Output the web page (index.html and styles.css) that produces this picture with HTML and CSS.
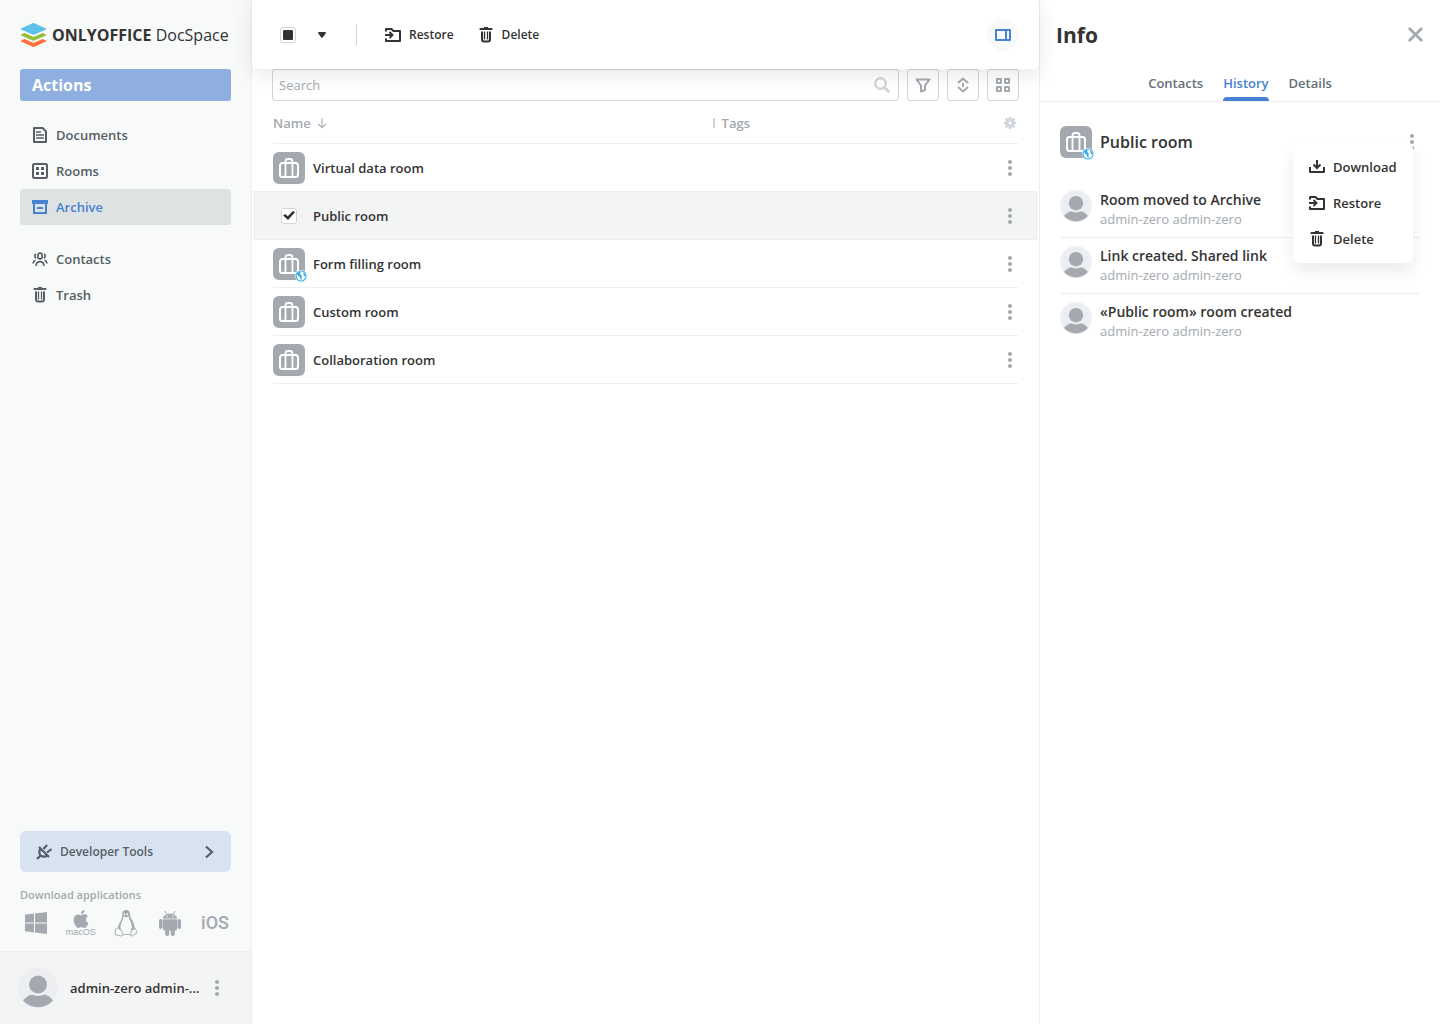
FILE: index.html
```html
<!DOCTYPE html>
<html lang="en">
<head>
<meta charset="utf-8">
<meta name="viewport" content="width=device-width, initial-scale=1">
<title>Archive - DocSpace</title>
<link rel="stylesheet" href="styles.css">
</head>
<body>
<svg class="sprite" aria-hidden="true">
  <symbol id="i-document" viewBox="0 0 16 16"><path d="M2 1h8.500L14 4.500V15H2z" fill="none" stroke="currentColor" stroke-width="2" stroke-linejoin="round"/><path d="M4 5h5M4 8h8M4 11h8" stroke="currentColor" stroke-width="1.600"/></symbol>
  <symbol id="i-rooms" viewBox="0 0 16 16"><rect x="1" y="1" width="14" height="14" rx="1.500" fill="none" stroke="currentColor" stroke-width="2"/><path d="M4 4h3v3H4zM9 4h3v3H9zM4 9h3v3H4zM9 9h3v3H9z" fill="currentColor"/></symbol>
  <symbol id="i-archive" viewBox="0 0 16 16"><path fill="currentColor" fill-rule="evenodd" d="M0 1h16v4h-1v10H1V5H0zM2 3v0h12V3zM3 5v8h10V5zM5 8h6v2H5z"/></symbol>
  <symbol id="i-people" viewBox="0 0 16 16"><g fill="none" stroke="currentColor" stroke-width="1.700"><rect x="5.900" y="2.200" width="4.200" height="5.600" rx="2.100"/><path d="M3.800 3C2.500 4 2.700 6 4 7.300M12.200 3C13.500 4 13.300 6 12 7.300M4.200 14.800c-.5-5.500 8.100-5.500 7.600 0M1 12.500c.2-1.800 1-2.800 2.500-3.300M15 12.500c-.2-1.800-1-2.800-2.500-3.300"/></g></symbol>
  <symbol id="i-trash" viewBox="0 0 16 16"><path fill="currentColor" d="M6 0h4v1h3.500q1 0 1 1v1h-13V2q0-1 1-1H6z"/><path d="M4 4.500V12.500q0 2 2 2h4q2 0 2-2V4.500" fill="none" stroke="currentColor" stroke-width="2"/><path d="M6.500 4.500v8M9.500 4.500v8" stroke="currentColor" stroke-width="1.300"/></symbol>
  <symbol id="i-restore" viewBox="0 0 16 16"><path d="M1 4.500V2h5.500l2 2H15v10H1v-2.500" fill="none" stroke="currentColor" stroke-width="2" stroke-linejoin="round"/><path d="M0 8h7M4.500 5 7.500 8l-3 3" fill="none" stroke="currentColor" stroke-width="1.900"/></symbol>
  <symbol id="i-download" viewBox="0 0 16 16"><path d="M1 8v5h14V8" fill="none" stroke="currentColor" stroke-width="2" stroke-linejoin="round"/><path d="M8 1v8M4.500 5.500 8 9 11.500 5.500" fill="none" stroke="currentColor" stroke-width="2"/></symbol>
  <symbol id="i-dots" viewBox="0 0 16 16"><g fill="currentColor"><circle cx="8" cy="2" r="2"/><circle cx="8" cy="8" r="2"/><circle cx="8" cy="14" r="2"/></g></symbol>
  <symbol id="i-plug" viewBox="0 0 16 16"><g fill="none" stroke="currentColor" stroke-width="2.200"><path d="M3 3 13 13M4.500 4.500C2.500 8 3 9.500 4.500 11.500 6.500 13 8.500 13.500 11.500 11.500M4.500 11.500 1 15M7.500 5 11 1M11 8.500 15.500 5"/></g></symbol>
  <symbol id="i-chevron" viewBox="0 0 16 16"><path d="M5 2.500 11 8l-6 5.500" fill="none" stroke="currentColor" stroke-width="2.200"/></symbol>
  <symbol id="i-windows" viewBox="0 0 24 24"><path fill="currentColor" d="M1 3.800l9-1.200V11.500H1zM11 2.500 23 1v10.500H11zM1 12.500h9v8.900L1 20.200zM11 12.500h12V23l-12-1.500z"/></symbol>
  <symbol id="i-apple" viewBox="0 0 24 24"><path fill="currentColor" d="M12.152 6.896c-.948 0-2.415-1.078-3.960-1.040-2.040.027-3.910 1.183-4.961 3.014-2.117 3.675-.546 9.103 1.519 12.090 1.013 1.454 2.208 3.090 3.792 3.039 1.520-.065 2.090-.987 3.935-.987 1.831 0 2.350.987 3.960.948 1.637-.026 2.676-1.480 3.676-2.948 1.156-1.688 1.636-3.325 1.662-3.415-.039-.013-3.182-1.221-3.220-4.857-.026-3.040 2.480-4.494 2.597-4.559-1.429-2.090-3.623-2.324-4.390-2.376-2-.156-3.675 1.090-4.610 1.090zM15.530 3.830c.843-1.012 1.400-2.427 1.245-3.830-1.207.052-2.662.805-3.532 1.818-.780.896-1.454 2.338-1.273 3.714 1.338.104 2.715-.688 3.559-1.701"/></symbol>
  <symbol id="i-linux" viewBox="0 0 24 28"><path fill="currentColor" fill-rule="evenodd" d="M12 1C8.800 1 8 3.500 8.200 6.500c.1 3-1.200 4.500-2.400 7C4.800 15.500 4.200 17 4 19l2.500 3c-.5-5 .5-8 2.500-12l.5-3 2.500 1.500L14.500 7l.8 3c2.500 4.500 3.200 8.500 2.200 12l3-2c.5-3-1-6.500-2.500-9-1.800-2.500-1.700-3.500-1.900-6C15.900 2.800 15 1 12 1zm-1.500 3.200a1 1 0 1 1 0 2 1 1 0 0 1 0-2zm2.900 0a1 1 0 1 1 0 2 1 1 0 0 1 0-2z"/><path d="M4.500 18.500 1.500 20 1 25.500l5.500 1.500 3-1-3-6zM18 19l-1.500 7.500 2 .5 4.500-3.500-2-4.500zM9.500 25.500h6.500" fill="none" stroke="currentColor" stroke-width=".9"/></symbol>
  <symbol id="i-android" viewBox="0 0 24 28"><g fill="currentColor"><path d="M5 9.500C5 3 19 3 19 9.500z"/><path d="M5 10.300h14V20q0 1.500-1.500 1.500h-11Q5 21.500 5 20z"/><rect x="1" y="10" width="3.600" height="10" rx="1.700"/><rect x="19.400" y="10" width="3.600" height="10" rx="1.700"/><rect x="7.200" y="18" width="4" height="9" rx="1.900"/><rect x="12.800" y="18" width="4" height="9" rx="1.900"/></g><path d="M7 2l2 3.500M17 2l-2 3.500" stroke="currentColor"/><g fill="#f8f9f9"><circle cx="9" cy="7.300" r=".8"/><circle cx="15" cy="7.300" r=".8"/></g></symbol>
  <symbol id="i-avatar" viewBox="0 0 40 40"><circle cx="20" cy="20" r="20" fill="#eceef1"/><circle cx="20" cy="16.500" r="9" fill="#a3a9ae"/><path d="M5 32.500C9 28 13 26 15 27q5 2.200 10 0c3-1 7 1.500 10 5.500a20 20 0 0 1-30 0z" fill="#a3a9ae"/></symbol>
  <symbol id="i-case" viewBox="0 0 32 32"><g fill="none" stroke="#fff"><rect x="7" y="11" width="18" height="14" rx="2.500" stroke-width="2"/><path d="M12.500 25V9.500q0-2.500 2.500-2.500h2q2.500 0 2.500 2.500V25" stroke-width="1.800"/></g></symbol>
  <symbol id="i-globe" viewBox="0 0 12 12"><circle cx="6" cy="6" r="6" fill="#fff"/><circle cx="6" cy="6" r="5" fill="#fff" stroke="#35abe3" stroke-width="1.100"/><path fill="#35abe3" d="M2 3.500 4 2l2 .3L5 4l1.800 1.500L6.500 7.500l.3 2.500-1.300-.5L4.800 7 2.500 5zM8 2l2 2.500.3 2L8.800 6z"/></symbol>
  <symbol id="i-search" viewBox="0 0 16 16"><g fill="none" stroke="currentColor"><circle cx="6.500" cy="6.500" r="5.200" stroke-width="2.400"/><path d="m10.500 10.500 4 4" stroke-width="2.800" stroke-linecap="round"/></g></symbol>
  <symbol id="i-filter" viewBox="0 0 16 16"><path d="M1.500 2.500h13L10 8.500v4.500L6 14.500v-6z" fill="none" stroke="currentColor" stroke-width="2" stroke-linejoin="round"/></symbol>
  <symbol id="i-sort" viewBox="0 0 16 16"><path d="M3 6l5-4.500L13 6M3 10l5 4.500L13 10M8 6v4" fill="none" stroke="currentColor" stroke-width="2"/></symbol>
  <symbol id="i-tiles" viewBox="0 0 16 16"><path d="M2 2h4v4H2zM10 2h4v4h-4zM2 10h4v4H2zM10 10h4v4h-4z" fill="none" stroke="currentColor" stroke-width="2" stroke-linejoin="round"/></symbol>
  <symbol id="i-panel" viewBox="0 0 16 16"><path d="M1 3h14v10H1zM11 3v10" fill="none" stroke="currentColor" stroke-width="2" stroke-linejoin="round"/></symbol>
  <symbol id="i-gear" viewBox="0 0 12 12"><circle cx="6" cy="6" r="3" fill="none" stroke="currentColor" stroke-width="3.200"/><path d="M6 0v2M6 10v2M0 6h2M10 6h2M1.500 1.500l1.700 1.700M8.800 8.800l1.700 1.700M1.500 10.500l1.700-1.700M8.800 3.200l1.700-1.700" stroke="currentColor" stroke-width="2.400"/></symbol>
  <symbol id="i-arrow" viewBox="0 0 12 12"><path d="M6 1.500v9M2 6.800l4 3.700 4-3.700" fill="none" stroke="currentColor" stroke-width="1.100"/></symbol>
  <symbol id="i-caret" viewBox="0 0 8 8"><path d="M.5 1h7q.8.800 0 1.800L4.700 6.500q-.7.700-1.400 0L.5 2.800Q-.3 1.800.5 1z" fill="currentColor"/></symbol>
  <symbol id="i-close" viewBox="0 0 16 16"><path d="M2.500 2.500l11 11M13.500 2.500l-11 11" stroke="currentColor" stroke-width="2.600" stroke-linecap="round"/></symbol>
  <symbol id="i-logo" viewBox="0 0 26 24"><path fill="#ff6f3d" d="M12 23.700.6 18.500q-1-.5 0-1L4 16l8 3.500q1 .4 2 0L22 16l3.400 1.500q1 .5 0 1L14 23.700q-1 .4-2 0z"/><path fill="#95c038" d="M12 17.500.6 12.500q-1-.5 0-1L4 10l8 3.500q1 .4 2 0L22 10l3.400 1.500q1 .5 0 1L14 17.500q-1 .4-2 0z"/><path fill="#5dc0e8" d="M12 11.500.6 6.500q-1-.5 0-1L12 .3q1-.4 2 0l11.400 5.200q1 .5 0 1L14 11.500q-1 .4-2 0z"/></symbol>
</svg>

<div class="app">
  <aside class="sidebar">
    <a class="logo" href="#"><svg class="logo-mark"><use href="#i-logo"/></svg><span class="logo-text"><b>ONLYOFFICE</b> DocSpace</span></a>
    <button class="actions" type="button">Actions</button>
    <nav class="nav">
      <a href="#"><svg class="icon"><use href="#i-document"/></svg>Documents</a>
      <a href="#"><svg class="icon"><use href="#i-rooms"/></svg>Rooms</a>
      <a href="#" class="active" aria-current="page"><svg class="icon"><use href="#i-archive"/></svg>Archive</a>
      <a href="#" class="nav-split"><svg class="icon"><use href="#i-people"/></svg>Contacts</a>
      <a href="#"><svg class="icon"><use href="#i-trash"/></svg>Trash</a>
    </nav>
    <div class="sidebar-bottom">
      <a class="dev-tools" href="#"><svg class="icon"><use href="#i-plug"/></svg><span>Developer Tools</span><svg class="icon"><use href="#i-chevron"/></svg></a>
      <p class="apps-title">Download applications</p>
      <div class="apps">
        <a href="#" aria-label="Windows"><svg class="app-win"><use href="#i-windows"/></svg></a>
        <a href="#"><svg class="app-apple"><use href="#i-apple"/></svg><span class="macos">macOS</span></a>
        <a href="#" aria-label="Linux"><svg class="app-tall"><use href="#i-linux"/></svg></a>
        <a href="#" aria-label="Android"><svg class="app-tall"><use href="#i-android"/></svg></a>
        <a href="#"><span class="ios">iOS</span></a>
      </div>
    </div>
    <div class="profile">
      <svg class="avatar-lg"><use href="#i-avatar"/></svg>
      <span class="profile-name">admin-zero admin-...</span>
      <button class="plain dots" type="button" aria-label="Profile menu"><svg class="icon"><use href="#i-dots"/></svg></button>
    </div>
  </aside>

  <main class="main">
    <div class="toolbar">
      <input class="check partial" type="checkbox" aria-label="Select all">
      <button class="plain caret" type="button" aria-label="Selection options"><svg><use href="#i-caret"/></svg></button>
      <span class="divider"></span>
      <button class="plain tool" type="button"><svg class="icon"><use href="#i-restore"/></svg>Restore</button>
      <button class="plain tool" type="button"><svg class="icon"><use href="#i-trash"/></svg>Delete</button>
      <button class="plain panel-toggle" type="button" aria-label="Toggle info panel"><svg class="icon"><use href="#i-panel"/></svg></button>
    </div>
    <div class="filters">
      <label class="search"><input type="text" placeholder="Search" aria-label="Search"><svg class="icon"><use href="#i-search"/></svg></label>
      <button class="square" type="button" aria-label="Filter"><svg class="icon"><use href="#i-filter"/></svg></button>
      <button class="square" type="button" aria-label="Sort"><svg class="icon"><use href="#i-sort"/></svg></button>
      <button class="square" type="button" aria-label="Tile view"><svg class="icon"><use href="#i-tiles"/></svg></button>
    </div>
    <table class="rooms">
      <thead>
        <tr><th scope="col">Name<svg class="sort-arrow"><use href="#i-arrow"/></svg></th><th scope="col" class="tags">Tags</th><th scope="col" class="menu-cell"><button class="plain gear" type="button" aria-label="Column settings"><svg><use href="#i-gear"/></svg></button></th></tr>
      </thead>
      <tbody>
        <tr><td><span class="room-icon"><svg><use href="#i-case"/></svg></span>Virtual data room</td><td></td><td class="menu-cell"><button class="plain dots" type="button" aria-label="Room menu"><svg class="icon"><use href="#i-dots"/></svg></button></td></tr>
        <tr class="selected"><td><span class="check-slot"><input class="check" id="public-room" type="checkbox" checked></span><label for="public-room">Public room</label></td><td></td><td class="menu-cell"><button class="plain dots" type="button" aria-label="Room menu"><svg class="icon"><use href="#i-dots"/></svg></button></td></tr>
        <tr><td><span class="room-icon"><svg><use href="#i-case"/></svg><svg class="globe"><use href="#i-globe"/></svg></span>Form filling room</td><td></td><td class="menu-cell"><button class="plain dots" type="button" aria-label="Room menu"><svg class="icon"><use href="#i-dots"/></svg></button></td></tr>
        <tr><td><span class="room-icon"><svg><use href="#i-case"/></svg></span>Custom room</td><td></td><td class="menu-cell"><button class="plain dots" type="button" aria-label="Room menu"><svg class="icon"><use href="#i-dots"/></svg></button></td></tr>
        <tr><td><span class="room-icon"><svg><use href="#i-case"/></svg></span>Collaboration room</td><td></td><td class="menu-cell"><button class="plain dots" type="button" aria-label="Room menu"><svg class="icon"><use href="#i-dots"/></svg></button></td></tr>
      </tbody>
    </table>
  </main>

  <aside class="info">
    <header class="info-head"><h1>Info</h1><button class="plain close" type="button" aria-label="Close"><svg><use href="#i-close"/></svg></button></header>
    <nav class="tabs"><a href="#">Contacts</a><a href="#" class="active">History</a><a href="#">Details</a></nav>
    <div class="info-body">
      <div class="info-room">
        <span class="room-icon"><svg><use href="#i-case"/></svg><svg class="globe"><use href="#i-globe"/></svg></span>
        <h2>Public room</h2>
        <div class="menu-anchor">
          <button class="plain dots" type="button" aria-label="Room menu"><svg class="icon"><use href="#i-dots"/></svg></button>
          <div class="menu">
            <button class="plain" type="button"><svg class="icon"><use href="#i-download"/></svg>Download</button>
            <button class="plain" type="button"><svg class="icon"><use href="#i-restore"/></svg>Restore</button>
            <button class="plain" type="button"><svg class="icon"><use href="#i-trash"/></svg>Delete</button>
          </div>
        </div>
      </div>
      <ul class="history">
        <li><svg class="avatar"><use href="#i-avatar"/></svg><div><strong>Room moved to Archive</strong><span>admin-zero admin-zero</span></div></li>
        <li><svg class="avatar"><use href="#i-avatar"/></svg><div><strong>Link created. Shared link</strong><span>admin-zero admin-zero</span></div></li>
        <li><svg class="avatar"><use href="#i-avatar"/></svg><div><strong>«Public room» room created</strong><span>admin-zero admin-zero</span></div></li>
      </ul>
    </div>
  </aside>
</div>
</body>
</html>
```
FILE: styles.css
```css
* { box-sizing: border-box; }

body {
  margin: 0;
  background: #fff;
  color: #333;
  font: 600 13px/20px "Open Sans", "Noto Sans", sans-serif;
}

a { color: inherit; text-decoration: none; }
button, input { font: inherit; color: inherit; }
h1, h2, p, ul { margin: 0; padding: 0; }
svg { display: block; flex: none; }

.sprite { position: absolute; width: 0; height: 0; }
.icon { width: 16px; height: 16px; }
.plain { padding: 0; border: 0; background: none; cursor: pointer; }
.dots { color: #a3a9ae; }

.app {
  display: grid;
  grid-template-columns: 252px minmax(0, 1fr) 401px;
  min-height: 100vh;
}

/* Sidebar */
.sidebar {
  display: flex;
  flex-direction: column;
  border-right: 1px solid #eceef1;
  background: #f8f9f9;
  color: #555f65;
}
.logo { display: flex; align-items: center; gap: 5px; height: 69px; padding: 1px 0 0 20px; color: #333; }
.logo-mark { width: 27px; height: 24px; }
.logo-text { font-size: 16px; font-weight: 400; white-space: nowrap; }
.actions {
  height: 32px;
  margin: 0 20px;
  padding: 0 12px;
  border: 0;
  border-radius: 3px;
  background: #8fafe0;
  color: #fff;
  font-size: 16px;
  font-weight: 700;
  text-align: left;
}
.nav { display: flex; flex-direction: column; margin: 16px 20px; }
.nav a { display: flex; align-items: center; gap: 8px; height: 36px; padding: 0 12px; border-radius: 3px; }
.nav .active { background: #dfe2e3; color: #4781d1; }
.nav .nav-split { margin-top: 16px; }

.sidebar-bottom { margin-top: auto; padding: 0 20px 10px; }
.dev-tools {
  display: flex;
  align-items: center;
  gap: 8px;
  height: 41px;
  padding: 0 14px 0 16px;
  border-radius: 6px;
  background: #d8e3f2;
  font-size: 12px;
}
.dev-tools span { flex: 1; }
.apps-title { margin-top: 13px; color: #a3a9ae; font-size: 11px; }
.apps { display: flex; justify-content: space-between; color: #a3a9ae; }
.apps a { display: flex; flex-direction: column; align-items: center; justify-content: center; width: 32px; height: 36px; }
.app-win { width: 24px; height: 24px; }
.app-apple { width: 18px; height: 18px; }
.app-tall { width: 24px; height: 28px; }
.macos { font: 400 9px/9px "Liberation Sans", Arial, sans-serif; }
.ios { font: 500 18px/20px Roboto, "Liberation Sans", sans-serif; }

.profile {
  display: flex;
  align-items: center;
  height: 73px;
  padding: 0 26px 0 18px;
  border-top: 1px solid #eceef1;
  background: #f3f4f4;
  color: #333;
}
.avatar-lg { width: 40px; height: 40px; margin-right: 12px; }
.profile-name { flex: 1; white-space: nowrap; }

/* Room list */
.toolbar {
  position: relative;
  z-index: 1;
  display: flex;
  align-items: center;
  height: 69px;
  padding: 0 20px 0 28px;
  border-radius: 0 0 6px 6px;
  background: #fff;
  box-shadow: 0 5px 20px rgba(4, 15, 27, 0.1);
  font-size: 12px;
}
.check {
  display: grid;
  place-items: center;
  flex: none;
  width: 16px;
  height: 16px;
  margin: 0;
  border: 1px solid #d0d5da;
  border-radius: 3px;
  background: #fff;
  appearance: none;
}
.check:checked::before {
  width: 12px;
  height: 10px;
  background: #333;
  clip-path: polygon(0 50%, 18% 34%, 40% 58%, 82% 4%, 100% 18%, 42% 96%);
  content: "";
}
.check.partial::before { width: 10px; height: 10px; border-radius: 1px; background: #333; content: ""; }
.caret { margin-left: 22px; }
.caret svg { width: 8px; height: 8px; }
.divider { width: 1px; height: 21px; margin: 0 28px 0 30px; background: #d0d5da; }
.tool { display: flex; align-items: center; gap: 8px; margin-right: 24px; }
.panel-toggle {
  display: grid;
  place-items: center;
  width: 32px;
  height: 32px;
  margin-left: auto;
  border-radius: 50%;
  background: #f8f9f9;
  color: #4781d1;
}

.filters { display: flex; gap: 8px; padding: 0 20px; }
.search {
  display: flex;
  flex: 1;
  align-items: center;
  height: 32px;
  padding: 0 8px 0 6px;
  border: 1px solid #d0d5da;
  border-radius: 3px;
  color: #d0d5da;
}
.search input { flex: 1; min-width: 0; padding: 0; border: 0; outline: 0; background: none; font-weight: 400; }
.search input::placeholder { color: #a3a9ae; opacity: 1; }
.square {
  display: grid;
  place-items: center;
  width: 32px;
  height: 32px;
  padding: 0;
  border: 1px solid #d0d5da;
  border-radius: 3px;
  background: #fff;
  color: #a3a9ae;
}

.rooms, .rooms thead, .rooms tbody { display: block; }
.rooms tr {
  display: grid;
  grid-template-columns: 59% 1fr 16px;
  align-items: center;
  height: 48px;
  margin: 0 21px;
  border-bottom: 1px solid #eceef1;
}
.rooms thead tr { height: 43px; padding-top: 2px; color: #a3a9ae; }
.rooms th, .rooms td { display: flex; align-items: center; padding: 0; font-weight: 600; text-align: left; }
.rooms .selected {
  height: 49px;
  margin: -1px 1px 0;
  padding: 0 20px;
  border-top: 1px solid #eceef1;
  background: #f3f4f4;
}
.sort-arrow { width: 12px; height: 12px; margin-left: 5px; }
.tags::before { width: 2px; height: 10px; margin-right: 7px; background: #d0d5da; content: ""; }
.rooms .menu-cell { justify-content: center; }
.gear { color: #d0d5da; }
.gear svg { width: 12px; height: 12px; }

.room-icon { position: relative; flex: none; width: 32px; height: 32px; margin-right: 8px; border-radius: 6px; background: #a3a9ae; }
.room-icon svg { width: 32px; height: 32px; }
.room-icon .globe { position: absolute; right: -2px; bottom: -2px; width: 12px; height: 12px; }
.check-slot { display: grid; place-items: center; width: 32px; height: 32px; margin-right: 8px; }

/* Info panel */
.info { border-left: 1px solid #eceef1; }
.info-head { display: flex; align-items: center; justify-content: space-between; height: 69px; padding: 0 16px; }
.info-head h1 { font-size: 21px; font-weight: 700; line-height: 28px; }
.close { color: #a3a9ae; }
.close svg { width: 17px; height: 17px; }
.tabs { display: flex; justify-content: center; gap: 20px; height: 33px; border-bottom: 1px solid #eceef1; color: #657077; }
.tabs a { padding-top: 4px; }
.tabs .active { display: flex; flex-direction: column; justify-content: space-between; color: #4781d1; }
.tabs .active::after { height: 4px; border-radius: 4px 4px 0 0; background: #4781d1; content: ""; }
.info-body { padding: 24px 20px; }
.info-room { display: flex; align-items: center; margin-bottom: 24px; }
.info-room h2 { flex: 1; font-size: 16px; font-weight: 600; line-height: 22px; }
.menu-anchor { position: relative; }
.menu-anchor .dots { display: block; }
.menu {
  position: absolute;
  top: 9px;
  right: 7px;
  z-index: 2;
  width: 120px;
  padding: 6px 0;
  border-radius: 6px;
  background: #fff;
  box-shadow: 0 8px 16px rgba(4, 15, 27, 0.08);
}
.menu button { display: flex; align-items: center; gap: 8px; width: 100%; height: 36px; padding: 0 16px; }
.history { list-style: none; }
.history li { display: flex; gap: 8px; height: 56px; padding-top: 8px; border-bottom: 1px solid #eceef1; }
.history li:last-child { border-bottom: 0; }
.avatar { width: 32px; height: 32px; }
.history strong { display: block; font-size: 14px; font-weight: 600; }
.history span { display: block; color: #a3a9ae; font-weight: 400; line-height: 18px; }
```
